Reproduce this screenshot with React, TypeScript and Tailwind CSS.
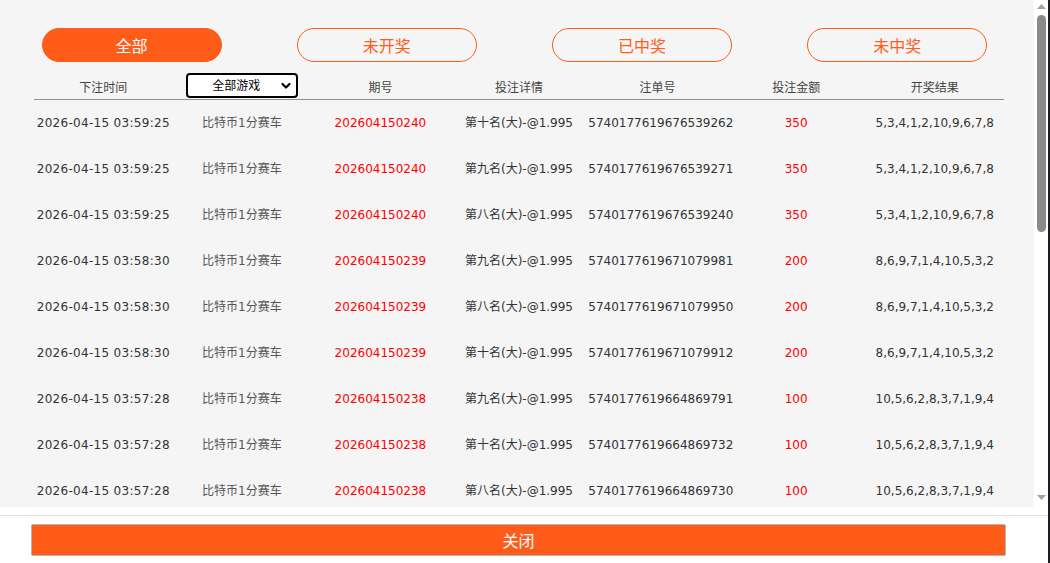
import React from "react";

const rows = [
  ["2026-04-15 03:59:25", "202604150240", "第十名(大)-@1.995", "5740177619676539262", "350", "5,3,4,1,2,10,9,6,7,8"],
  ["2026-04-15 03:59:25", "202604150240", "第九名(大)-@1.995", "5740177619676539271", "350", "5,3,4,1,2,10,9,6,7,8"],
  ["2026-04-15 03:59:25", "202604150240", "第八名(大)-@1.995", "5740177619676539240", "350", "5,3,4,1,2,10,9,6,7,8"],
  ["2026-04-15 03:58:30", "202604150239", "第九名(大)-@1.995", "5740177619671079981", "200", "8,6,9,7,1,4,10,5,3,2"],
  ["2026-04-15 03:58:30", "202604150239", "第八名(大)-@1.995", "5740177619671079950", "200", "8,6,9,7,1,4,10,5,3,2"],
  ["2026-04-15 03:58:30", "202604150239", "第十名(大)-@1.995", "5740177619671079912", "200", "8,6,9,7,1,4,10,5,3,2"],
  ["2026-04-15 03:57:28", "202604150238", "第九名(大)-@1.995", "5740177619664869791", "100", "10,5,6,2,8,3,7,1,9,4"],
  ["2026-04-15 03:57:28", "202604150238", "第十名(大)-@1.995", "5740177619664869732", "100", "10,5,6,2,8,3,7,1,9,4"],
  ["2026-04-15 03:57:28", "202604150238", "第八名(大)-@1.995", "5740177619664869730", "100", "10,5,6,2,8,3,7,1,9,4"],
];

const tabs = ["全部", "未开奖", "已中奖", "未中奖"];

export default function App() {
  return (
    <div
      className="w-[1050px] h-[563px] flex flex-col bg-white border-r-2 border-[#1c1c24] overflow-hidden"
      style={{ fontFamily: '"DejaVu Sans", "Noto Sans CJK SC", sans-serif' }}
    >
      <div className="flex h-[507px] shrink-0">
        <div className="w-[1034px] bg-[#f5f5f5] overflow-hidden">
          <div className="grid grid-cols-4 pl-[4px] pr-[9px] pt-[28px]">
            {tabs.map((t, i) => (
              <div key={t} className="flex justify-center">
                <div
                  className={
                    i === 0
                      ? "w-[180px] h-[34px] rounded-full bg-[#ff5c1a] border border-[#ff5c1a] text-white text-[16px] flex items-center justify-center"
                      : "w-[180px] h-[34px] rounded-full bg-transparent border border-[#ff5c1a] text-[#ff5c1a] text-[16px] flex items-center justify-center"
                  }
                  style={{ fontFamily: '"Noto Sans CJK SC", sans-serif' }}
                >
                  {t}
                </div>
              </div>
            ))}
          </div>
          <div className="ml-[34px] w-[970px] mt-[11px]">
            <div className="grid grid-cols-7 h-[27px] items-end border-b border-[#9c8a8a] text-[12px] text-[#444] leading-[14px]">
              <div className="text-center pb-[4px]">下注时间</div>
              <div className="flex justify-center self-start">
                <div className="w-[112px] h-[25px] rounded-[4px] border-2 border-black bg-white flex items-center text-black text-[12px]">
                  <span className="flex-1 text-center pl-[4px]">全部游戏</span>
                  <svg width="10" height="8" viewBox="0 0 10 8" className="mr-[5px]">
                    <path d="M1.5 2 L5 5.5 L8.5 2" fill="none" stroke="black" strokeWidth="2.2" strokeLinecap="round" strokeLinejoin="round" />
                  </svg>
                </div>
              </div>
              <div className="text-center pb-[4px]">期号</div>
              <div className="text-center pb-[4px]">投注详情</div>
              <div className="text-center pb-[4px]">注单号</div>
              <div className="text-center pb-[4px]">投注金额</div>
              <div className="text-center pb-[4px]">开奖结果</div>
            </div>
            {rows.map((r, i) => (
              <div key={i} className="grid grid-cols-7 h-[46px] items-center text-[12px] whitespace-nowrap">
                <div className="text-center text-[#333] tracking-[0.3px]">{r[0]}</div>
                <div className="text-center text-[#555]">比特币1分赛车</div>
                <div className="text-center text-[#ff0000]">{r[1]}</div>
                <div className="text-center text-[#333]">{r[2]}</div>
                <div className="text-center text-[#333]">{r[3]}</div>
                <div className="text-center text-[#ff0000]">{r[4]}</div>
                <div className="text-center text-[#333]">{r[5]}</div>
              </div>
            ))}
          </div>
        </div>
        <div className="w-[14px] bg-white flex flex-col items-center">
          <svg width="9" height="5" viewBox="0 0 9 5" className="mt-[4px]">
            <path d="M0 5 L4.5 0 L9 5 Z" fill="#a3a3a3" />
          </svg>
          <div className="w-[9px] h-[217px] mt-[6px] rounded-full bg-[#8a8a8a]" />
          <div className="flex-1" />
          <svg width="9" height="5" viewBox="0 0 9 5" className="mb-[7px]">
            <path d="M0 0 L9 0 L4.5 5 Z" fill="#a3a3a3" />
          </svg>
        </div>
      </div>
      <div className="flex-1 bg-white">
        <div className="mt-[8px] border-t border-[#dddddd]" />
        <button
          className="ml-[31px] mt-[8px] w-[975px] h-[32px] bg-[#ff5c1a] border border-[#b5b5b5] rounded-[2px] text-white text-[16px] flex items-center justify-center"
          style={{ fontFamily: '"Noto Sans CJK SC", sans-serif' }}
        >
          关闭
        </button>
      </div>
    </div>
  );
}
